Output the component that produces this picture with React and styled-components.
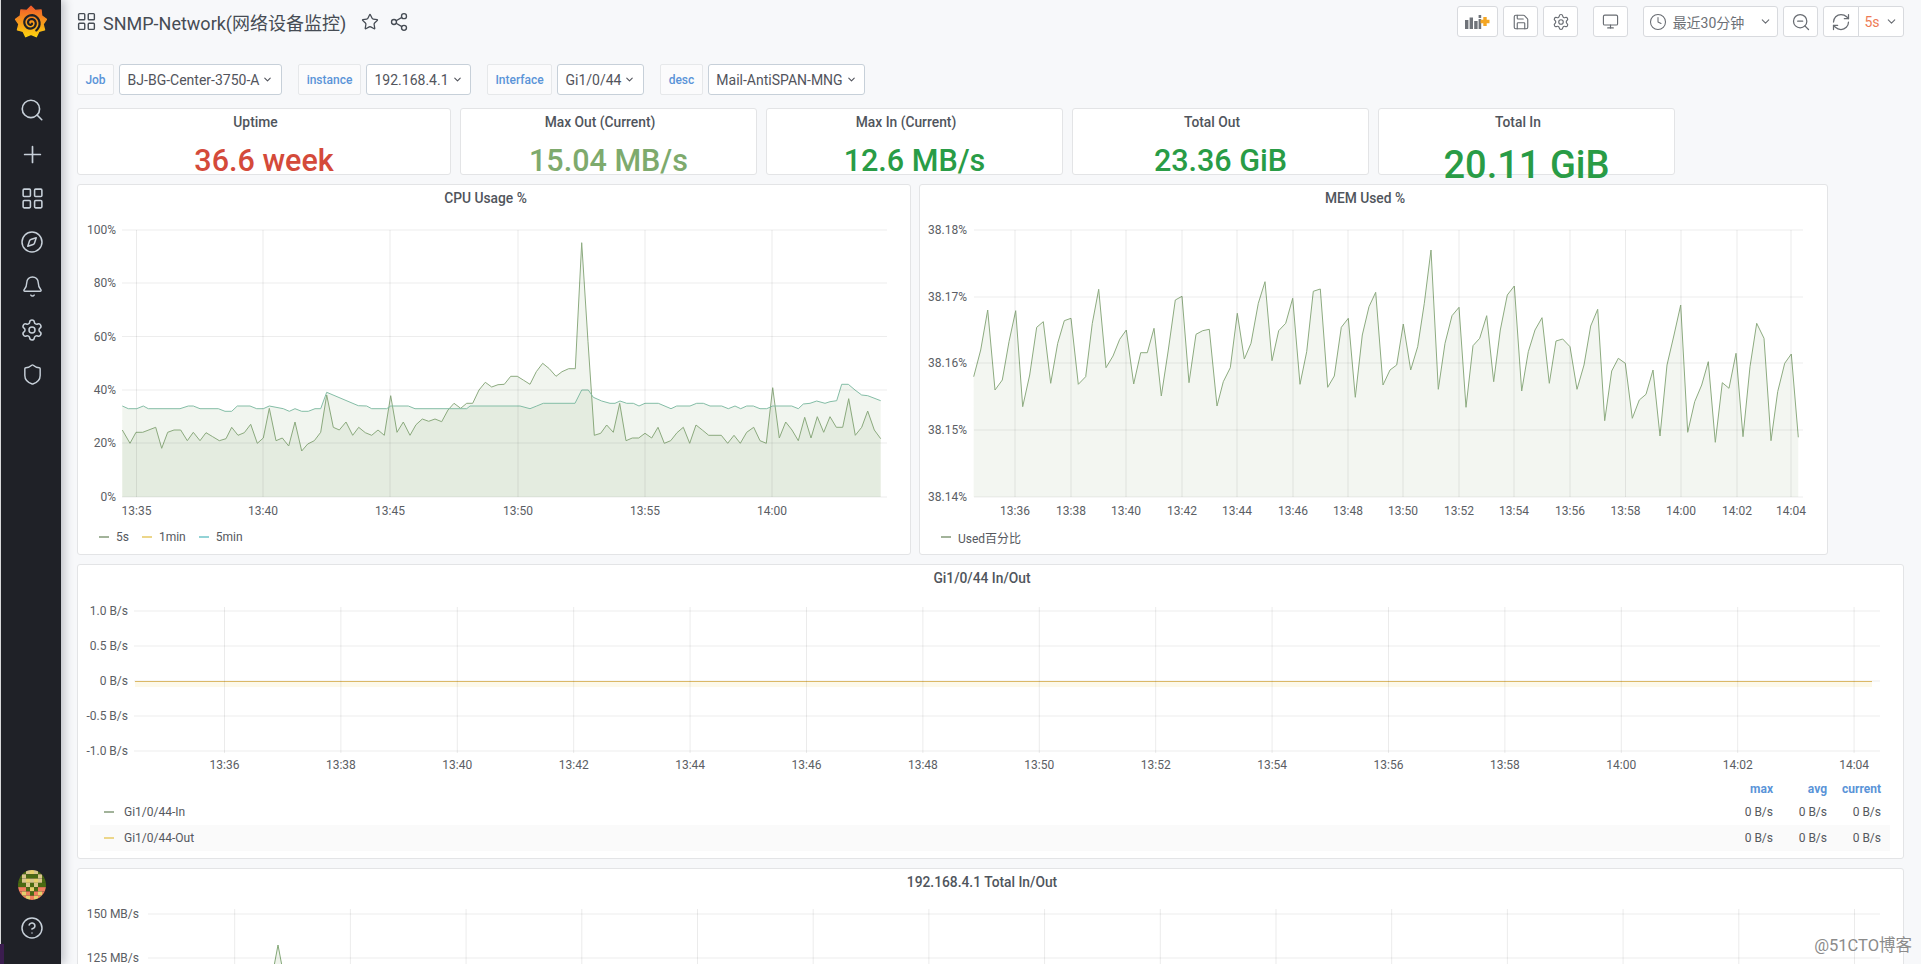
import React from 'react';
import styled, { createGlobalStyle } from 'styled-components';
import {
  Search, Plus, LayoutGrid, Compass, Bell, Settings, Shield, CircleHelp,
  Star, Share2, Save, Monitor, Clock, ZoomOut, RefreshCw, ChevronDown,
} from 'lucide-react';

const FONT = 'Roboto, "Noto Sans CJK SC", "Liberation Sans", sans-serif';

const GlobalStyle = createGlobalStyle`
  html, body { margin: 0; padding: 0; height: 100%; overflow: hidden; background: #f7f8fa; }
  body { font-family: ${FONT}; color: #464c54; }
  * { box-sizing: border-box; }
`;

/* ---------- chart data (page coordinates) ---------- */
const conv = (x0, y0, list, sx = 3) => list.map(([x, y]) => [x0 + x / sx, y0 + y / 3]);

const cpu5s = [
  ...conv(0, 200, [[367,690],[390,730],[408,697],[428,697],[467,682],[485,745],[503,697],[522,690],[542,690],[562,722],[580,697],[600,722],[618,698],[638,710],[658,722],[678,716],[695,682],[714,706],[733,698],[752,673],[772,730],[790,714],[808,625],[828,722],[847,714],[866,738],[885,666],[905,753],[923,732],[943,722],[962,697],[980,585],[1000,682],[1018,690],[1038,666],[1058,706],[1076,682],[1096,698],[1115,706],[1134,690],[1153,706],[1172,587],[1191,697],[1210,666],[1230,706],[1248,674],[1267,657],[1286,664],[1305,657],[1325,665],[1344,630],[1362,610],[1382,625],[1400,610]]),
  ...conv(470, 200, [[8,610],[27,570],[46,547],[65,561],[84,554],[103,553],[122,529],[142,529],[161,541],[180,553],[199,515],[218,490],[238,506],[258,529],[276,515],[296,506],[316,506],[335,128],[354,425],[373,706],[392,700],[410,675],[430,697],[449,610],[468,722],[487,714],[506,714],[525,700],[545,714],[564,682],[583,730],[602,722],[621,698],[640,682],[659,730],[678,675],[697,690],[716,706],[735,706],[754,706],[773,730],[792,706],[811,730],[830,697],[851,682],[870,722],[889,730],[908,563],[928,714],[947,666],[966,690],[985,722],[1004,652],[1023,714],[1042,650],[1061,697],[1080,650],[1099,682],[1118,682],[1136,596],[1156,706],[1175,682],[1193,633],[1213,690],[1232,716]]),
];

const cpu5m = [
  ...conv(0, 200, [[367,618],[385,626],[410,626],[430,618],[445,626],[540,626],[565,618],[580,618],[600,626],[655,626],[675,634],[695,634],[712,618],[750,618],[770,626],[790,626],[808,618],[850,626],[868,634],[885,626],[905,634],[925,634],[945,626],[962,626],[980,577],[1075,617],[1100,618],[1115,626],[1160,626],[1172,618],[1225,618],[1245,626],[1400,626]]),
  ...conv(470, 200, [[0,618],[150,618],[180,626],[200,618],[220,610],[315,610],[335,570],[355,570],[370,592],[395,603],[420,610],[435,610],[450,603],[470,610],[490,610],[507,618],[525,610],[565,610],[603,626],[620,618],[660,618],[680,610],[700,610],[720,618],[755,618],[775,626],[795,618],[812,626],[830,618],[850,618],[870,626],[890,626],[908,618],[965,618],[985,626],[1000,612],[1020,610],[1040,603],[1065,610],[1080,605],[1100,602],[1115,553],[1135,553],[1155,570],[1175,585],[1193,587],[1232,602]]),
];

const mem = [
  ...conv(915, 200, [[176,530],[197,450],[218,330],[240,570],[262,540],[282,425],[302,332],[323,620],[344,525],[365,382],[385,365],[407,550],[428,430],[448,362],[468,355],[490,553],[512,530],[532,370],[551,268],[573,503],[594,468],[614,418],[634,390],[656,552],[677,458],[697,458],[717,385],[739,588],[760,450],[781,300],[801,289],[822,548],[843,403],[863,392],[883,388],[906,618],[925,545],[946,503],[967,340],[988,477],[1008,430],[1030,310],[1050,245],[1071,482],[1091,392],[1112,370],[1133,295],[1155,553],[1175,455],[1195,274],[1216,267],[1238,562],[1258,528],[1279,382],[1300,355],[1321,592]]),
  ...conv(1360, 200, [[7,405],[27,320],[47,277],[69,555],[90,510],[110,495],[130,372],[152,510],[173,440],[193,310],[213,150],[235,568],[255,430],[276,347],[297,322],[318,622],[339,437],[359,415],[380,347],[401,545],[421,390],[442,285],[463,258],[485,573],[505,455],[525,390],[546,353],[568,550],[588,423],[608,417],[630,440],[651,568],[672,495],[692,378],[713,328],[734,662],[755,513],[775,475],[796,490],[817,655],[838,600],[858,583],[879,510],[900,708],[921,495],[942,405],[962,315],[983,697],[1004,605],[1025,555],[1045,485],[1066,727],[1087,548],[1107,565],[1128,460],[1149,710],[1170,500],[1190,370],[1212,415],[1233,722],[1253,575],[1274,490],[1294,462],[1315,712]]),
];

const line = (pts) => pts.map(([x, y], i) => `${i ? 'L' : 'M'}${x.toFixed(1)} ${y.toFixed(1)}`).join(' ');
const area = (pts, base) => `${line(pts)} L${pts[pts.length - 1][0].toFixed(1)} ${base} L${pts[0][0].toFixed(1)} ${base} Z`;

const cpuV = [[136.5,'13:35'],[263,'13:40'],[390,'13:45'],[518,'13:50'],[645,'13:55'],[772,'14:00']];
const memTimes = ['13:36','13:38','13:40','13:42','13:44','13:46','13:48','13:50','13:52','13:54','13:56','13:58','14:00','14:02','14:04'];
const memX = [1015,1071,1126,1182,1237,1293,1348,1403,1459,1514,1570,1625.5,1681,1737,1791];
const ioV = memTimes.map((t, i) => [224.5 + i * 116.4, t]);
const totalX = Array.from({ length: 15 }, (_, i) => 234.7 + i * 115.7);

/* ---------- layout ---------- */
const Shell = styled.div`
  display: flex;
  position: relative;
  width: 100%;
  height: 100vh;
  overflow: hidden;
  font-family: ${FONT};
`;

const Sidebar = styled.nav`
  position: relative;
  z-index: 2;
  flex: 0 0 61px;
  display: flex;
  flex-direction: column;
  align-items: center;
  background: #1f2127;
  border-left: 1px solid #d8d9da;
  box-shadow: 3px 0 9px rgba(40, 44, 60, 0.28);
  padding: 5px 0 15px;
  color: #c7d0d9;
`;

const NavList = styled.div`
  margin-top: 49px;
  display: flex;
  flex-direction: column;
`;

const NavBottom = styled.div`
  margin-top: auto;
  display: flex;
  flex-direction: column;
`;

const NavItem = styled.div`
  width: 60px;
  height: ${(p) => p.$h || 44}px;
  display: flex;
  align-items: center;
  justify-content: center;
  padding-left: 2px;
`;

const CornerMark = styled.div`
  position: absolute;
  left: -1px;
  bottom: 0;
  width: 4px;
  height: 20px;
  background: #3b1d4f;
`;

const Main = styled.main`
  flex: 1;
  min-width: 0;
  padding: 6px 17px 0 16px;
  display: flex;
  flex-direction: column;
  overflow: hidden;
`;

const TopBar = styled.header`
  flex: none;
  display: flex;
  align-items: center;
  height: 31px;
  color: #464c54;
`;

const TitleIcon = styled.span`
  display: flex;
  margin: 0 6px 0 -1px;
  color: #464c54;
`;

const DashTitle = styled.h1`
  margin: 0;
  font-size: 18px;
  font-weight: 400;
  color: #464c54;
  white-space: nowrap;
`;

const TitleAction = styled.span`
  display: flex;
  margin-left: ${(p) => p.$ml}px;
  color: #464c54;
`;

const TopActions = styled.div`
  margin-left: auto;
  display: flex;
  align-items: center;
`;

const ToolButton = styled.div`
  display: flex;
  align-items: center;
  justify-content: center;
  gap: ${(p) => p.$gap || 0}px;
  width: ${(p) => p.$w}px;
  height: 31px;
  margin-left: ${(p) => p.$ml || 0}px;
  background: #fff;
  border: 1px solid #d8dade;
  border-radius: ${(p) => p.$radius || '3px'};
  color: #686c72;
  font-size: 14px;
  white-space: nowrap;
`;

const OrangeText = styled.span`
  color: #ee7b55;
`;

const TimeText = styled.span`
  color: #6c7076;
  margin-right: 9px;
`;

const VarBar = styled.div`
  flex: none;
  display: flex;
  align-items: center;
  height: 31px;
  margin-top: 27px;
`;

const VarLabel = styled.div`
  display: flex;
  align-items: center;
  justify-content: center;
  width: ${(p) => p.$w}px;
  height: 31px;
  margin-left: ${(p) => p.$ml || 0}px;
  background: #fbfbfc;
  border: 1px solid #e6e8ea;
  border-radius: 2px;
  color: #5a94d8;
  font-size: 12px;
  font-weight: 500;
`;

const VarValue = styled.div`
  display: flex;
  align-items: center;
  justify-content: center;
  gap: 3px;
  width: ${(p) => p.$w}px;
  height: 31px;
  margin-left: 5px;
  background: #fff;
  border: 1px solid #c7d0d9;
  border-radius: 3px;
  color: #52545c;
  font-size: 14px;
  white-space: nowrap;
`;

const StatRow = styled.div`
  flex: none;
  display: grid;
  grid-template-columns: 374px 297px 297px 297px 297px;
  column-gap: 9px;
  margin-top: 13px;
`;

const Panel = styled.section`
  background: #fff;
  border: 1px solid #e3e4e6;
  border-radius: 3px;
`;

const StatPanel = styled(Panel)`
  height: 67px;
  display: flex;
  flex-direction: column;
  align-items: center;
`;

const PanelTitle = styled.div`
  height: 27px;
  line-height: 26px;
  padding-right: 17px;
  font-size: 13.8px;
  font-weight: 500;
  color: #50555c;
  text-align: center;
  white-space: nowrap;
`;

const StatValue = styled.div`
  font-size: ${(p) => p.$size}px;
  line-height: 36px;
  margin-top: ${(p) => p.$mt || 0}px;
  font-weight: 500;
  color: ${(p) => p.$color};
  white-space: nowrap;
`;

const ChartRow = styled.div`
  flex: none;
  display: grid;
  grid-template-columns: 834px 909px;
  column-gap: 8px;
  margin-top: 9px;
`;

const GraphPanel = styled(Panel)`
  flex: none;
  height: ${(p) => p.$h}px;
  margin-top: ${(p) => p.$mt || 0}px;
  overflow: hidden;
`;

const Plot = styled.svg`
  display: block;
  font-family: ${FONT};
`;

const AxisText = styled.text`
  font-size: 12px;
  fill: #5b5e64;
`;

const Legend = styled.div`
  display: flex;
  align-items: center;
  height: 24px;
  padding-left: 21px;
  font-size: 12px;
  color: #55585e;
`;

const LegendEntry = styled.div`
  display: flex;
  align-items: center;
  margin-right: 13px;
`;

const Dash = styled.i`
  display: block;
  flex: none;
  width: 10px;
  height: 2px;
  margin-right: ${(p) => p.$mr || 7}px;
  background: ${(p) => p.$color};
`;

const LegendTable = styled.div`
  margin-left: 12px;
  width: 1800px;
  font-size: 12px;
  color: #55585e;
`;

const LegendRow = styled.div`
  display: flex;
  align-items: center;
  height: ${(p) => p.$h || 26}px;
  padding: 0 9px 0 14px;
  background: ${(p) => (p.$alt ? '#fafafa' : 'transparent')};
`;

const LegendName = styled.div`
  flex: 1;
  display: flex;
  align-items: center;
`;

const LegendCell = styled.div`
  width: 54px;
  text-align: right;
  color: ${(p) => (p.$head ? '#5a94d8' : 'inherit')};
  font-weight: ${(p) => (p.$head ? 700 : 400)};
`;

const Watermark = styled.div`
  position: absolute;
  right: 9px;
  bottom: 8px;
  z-index: 3;
  font-size: 16.5px;
  color: #8b8b8b;
  text-shadow: 0 0 2px #fff;
`;

/* ---------- drawings ---------- */
const Logo = () => {
  const cx = 20, cy = 20;
  const teeth = 9;
  let d = '';
  for (let i = 0; i < teeth * 2; i++) {
    const a = (i / (teeth * 2)) * Math.PI * 2 - Math.PI / 2;
    const r = i % 2 === 0 ? 18.5 : 14.5;
    d += `${i ? 'L' : 'M'}${(cx + r * Math.cos(a)).toFixed(1)} ${(cy + r * Math.sin(a)).toFixed(1)} `;
  }
  let s = '';
  for (let t = 0; t <= 1; t += 0.02) {
    const a = t * Math.PI * 4.2 + 0.6;
    const r = 1.5 + t * 9.5;
    s += `${t ? 'L' : 'M'}${(cx + r * Math.cos(a)).toFixed(1)} ${(cy + 1 + r * Math.sin(a)).toFixed(1)} `;
  }
  return (
    <svg width="34" height="34" viewBox="0 0 40 40" aria-label="Grafana">
      <defs>
        <linearGradient id="gf" x1="0" y1="1" x2="0" y2="0">
          <stop offset="0" stopColor="#fcd20e" />
          <stop offset="1" stopColor="#f15a2b" />
        </linearGradient>
      </defs>
      <path d={d + 'Z'} fill="url(#gf)" stroke="url(#gf)" strokeWidth="1.5" strokeLinejoin="round" />
      <path d={s} fill="none" stroke="#1f2127" strokeWidth="2.6" strokeLinecap="round" />
    </svg>
  );
};

const AVATAR = [
  'GGPYPGG',
  'GPGGGPG',
  'GPYPYPG',
  'GGPGPGG',
  'SSGYGSS',
  'SYSGSYS',
  'GSYSYSG',
];
const AVATAR_COLORS = { G: '#4a6a12', P: '#d8c58a', Y: '#e6cf6c', S: '#f0805e' };

const Avatar = () => (
  <svg width="28" height="30" viewBox="0 0 28 28" preserveAspectRatio="none" aria-label="avatar">
    <defs>
      <clipPath id="av"><circle cx="14" cy="14" r="14" /></clipPath>
    </defs>
    <g clipPath="url(#av)">
      {AVATAR.map((row, y) =>
        row.split('').map((c, x) => (
          <rect key={`${x}-${y}`} x={x * 4} y={y * 4} width="4" height="4" fill={AVATAR_COLORS[c]} />
        ))
      )}
    </g>
  </svg>
);

const AddPanelIcon = () => (
  <svg width="25" height="16" viewBox="0 0 25 16" aria-label="add panel">
    <g fill="#6f7379">
      <rect x="0" y="6" width="3.4" height="9" />
      <rect x="4.6" y="3.5" width="3.4" height="11.5" />
      <rect x="9.2" y="7" width="3.4" height="8" />
      <rect x="13.6" y="1" width="2.6" height="3" />
      <rect x="13.6" y="5" width="2.6" height="10" />
    </g>
    <path d="M20 3v9M15.5 7.5h9" stroke="#f4a623" strokeWidth="3.4" />
  </svg>
);

const Chart = ({ box, h, gridL, gridR, labelR, vs, vTop, vBottom, labelY, children }) => (
  <Plot width={box.w} height={box.h} viewBox={`${box.x} ${box.y} ${box.w} ${box.h}`}>
    {children}
    {h.map(([y]) => (
      <line key={y} x1={gridL} x2={gridR} y1={y} y2={y} stroke="#000" strokeOpacity="0.07" />
    ))}
    {vs.map(([x]) => (
      <line key={x} x1={x} x2={x} y1={vTop} y2={vBottom} stroke="#000" strokeOpacity="0.08" />
    ))}
    {h.map(([y, t]) => (
      <AxisText key={t} x={labelR} y={y + 4} textAnchor="end">{t}</AxisText>
    ))}
    {labelY && vs.map(([x, t]) => (
      <AxisText key={t} x={x} y={labelY} textAnchor="middle">{t}</AxisText>
    ))}
  </Plot>
);

const Series = ({ pts, base, stroke, fill }) => (
  <>
    <path d={area(pts, base)} fill={fill} />
    <path d={line(pts)} fill="none" stroke={stroke} strokeWidth="1" strokeLinejoin="round" />
  </>
);

const navIcons = [
  [Search, 26], [Plus, 27], [LayoutGrid, 25], [Compass, 24], [Bell, 23], [Settings, 24], [Shield, 23],
];

export default function App() {
  return (
    <Shell>
      <GlobalStyle />
      <Sidebar>
        <Logo />
        <NavList>
          {navIcons.map(([Icon, size], i) => (
            <NavItem key={i}><Icon size={size} strokeWidth={1.5} /></NavItem>
          ))}
        </NavList>
        <NavBottom>
          <NavItem $h={43}><Avatar /></NavItem>
          <NavItem $h={43}><CircleHelp size={24} strokeWidth={1.5} /></NavItem>
        </NavBottom>
        <CornerMark />
      </Sidebar>

      <Main>
        <TopBar>
          <TitleIcon><LayoutGrid size={21} strokeWidth={1.6} /></TitleIcon>
          <DashTitle>SNMP-Network(网络设备监控)</DashTitle>
          <TitleAction $ml={15}><Star size={18} strokeWidth={1.7} /></TitleAction>
          <TitleAction $ml={10}><Share2 size={20} strokeWidth={1.6} /></TitleAction>
          <TopActions>
            <ToolButton $w={41}><AddPanelIcon /></ToolButton>
            <ToolButton $w={35} $ml={5}><Save size={18} strokeWidth={1.5} /></ToolButton>
            <ToolButton $w={35} $ml={5}><Settings size={18} strokeWidth={1.5} /></ToolButton>
            <ToolButton $w={35} $ml={15}><Monitor size={17} strokeWidth={1.6} /></ToolButton>
            <ToolButton $w={135} $ml={15} $gap={6}>
              <Clock size={18} strokeWidth={1.4} />
              <TimeText>最近30分钟</TimeText>
              <ChevronDown size={13} strokeWidth={2} />
            </ToolButton>
            <ToolButton $w={35} $ml={5}><ZoomOut size={20} strokeWidth={1.5} /></ToolButton>
            <ToolButton $w={36} $ml={5} $radius="3px 0 0 3px"><RefreshCw size={20} strokeWidth={1.5} /></ToolButton>
            <ToolButton $w={46} $ml={-1} $gap={5} $radius="0 3px 3px 0">
              <OrangeText>5s</OrangeText>
              <ChevronDown size={13} strokeWidth={2} />
            </ToolButton>
          </TopActions>
        </TopBar>

        <VarBar>
          <VarLabel $w={37}>Job</VarLabel>
          <VarValue $w={163}>BJ-BG-Center-3750-A <ChevronDown size={11} strokeWidth={2.4} /></VarValue>
          <VarLabel $w={63} $ml={16}>instance</VarLabel>
          <VarValue $w={105}>192.168.4.1 <ChevronDown size={11} strokeWidth={2.4} /></VarValue>
          <VarLabel $w={65} $ml={16}>Interface</VarLabel>
          <VarValue $w={87}>Gi1/0/44 <ChevronDown size={11} strokeWidth={2.4} /></VarValue>
          <VarLabel $w={43} $ml={16}>desc</VarLabel>
          <VarValue $w={157}>Mail-AntiSPAN-MNG <ChevronDown size={11} strokeWidth={2.4} /></VarValue>
        </VarBar>

        <StatRow>
          <StatPanel><PanelTitle>Uptime</PanelTitle><StatValue $size={30.5} $mt={8} $color="#d44a3a">36.6 week</StatValue></StatPanel>
          <StatPanel><PanelTitle>Max Out (Current)</PanelTitle><StatValue $size={30.5} $mt={8} $color="#7eaa6d">15.04 MB/s</StatValue></StatPanel>
          <StatPanel><PanelTitle>Max In (Current)</PanelTitle><StatValue $size={30.5} $mt={8} $color="#299c46">12.6 MB/s</StatValue></StatPanel>
          <StatPanel><PanelTitle>Total Out</PanelTitle><StatValue $size={30.5} $mt={8} $color="#299c46">23.36 GiB</StatValue></StatPanel>
          <StatPanel><PanelTitle>Total In</PanelTitle><StatValue $size={38} $mt={12} $color="#299c46">20.11 GiB</StatValue></StatPanel>
        </StatRow>

        <ChartRow>
          <GraphPanel $h={371}>
            <PanelTitle>CPU Usage %</PanelTitle>
            <Chart
              box={{ x: 78, y: 212, w: 832, h: 313 }}
              h={[[230,'100%'],[283,'80%'],[336.5,'60%'],[390,'40%'],[443,'20%'],[497,'0%']]}
              gridL={122} gridR={887} labelR={116}
              vs={cpuV} vTop={230} vBottom={497} labelY={515}
            >
              <Series pts={cpu5s} base={497} stroke="#8dab80" fill="rgba(120,160,100,0.105)" />
              <Series pts={cpu5m} base={497} stroke="#84bda6" fill="rgba(120,160,100,0.105)" />
            </Chart>
            <Legend>
              <LegendEntry><Dash $color="#a2b39a" />5s</LegendEntry>
              <LegendEntry><Dash $color="#ecd68a" />1min</LegendEntry>
              <LegendEntry><Dash $color="#93d3d6" />5min</LegendEntry>
            </Legend>
          </GraphPanel>

          <GraphPanel $h={371}>
            <PanelTitle>MEM Used %</PanelTitle>
            <Chart
              box={{ x: 920, y: 212, w: 907, h: 313 }}
              h={[[230,'38.18%'],[297,'38.17%'],[363,'38.16%'],[430,'38.15%'],[497,'38.14%']]}
              gridL={974} gridR={1803} labelR={967}
              vs={memTimes.map((t, i) => [memX[i], t])} vTop={230} vBottom={497} labelY={515}
            >
              <Series pts={mem} base={497} stroke="#8dab80" fill="rgba(120,160,100,0.09)" />
            </Chart>
            <Legend>
              <LegendEntry><Dash $color="#a2b39a" />Used百分比</LegendEntry>
            </Legend>
          </GraphPanel>
        </ChartRow>

        <GraphPanel $h={295} $mt={9}>
          <PanelTitle>Gi1/0/44 In/Out</PanelTitle>
          <Chart
            box={{ x: 78, y: 591, w: 1825, h: 187 }}
            h={[[610,'1.0 B/s'],[645,'0.5 B/s'],[680,'0 B/s'],[715,'-0.5 B/s'],[750,'-1.0 B/s']]}
            gridL={134} gridR={1880} labelR={128}
            vs={ioV} vTop={606} vBottom={752} labelY={768}
          >
            <rect x="135" y="680" width="1737" height="6" fill="#fdf9ea" />
            <line x1="135" x2="1872" y1="680.5" y2="680.5" stroke="#e3bf6a" />
          </Chart>
          <LegendTable>
            <LegendRow $h={20}>
              <LegendName />
              <LegendCell $head>max</LegendCell>
              <LegendCell $head>avg</LegendCell>
              <LegendCell $head>current</LegendCell>
            </LegendRow>
            <LegendRow>
              <LegendName><Dash $color="#a2b39a" $mr={10} />Gi1/0/44-In</LegendName>
              <LegendCell>0 B/s</LegendCell><LegendCell>0 B/s</LegendCell><LegendCell>0 B/s</LegendCell>
            </LegendRow>
            <LegendRow $alt>
              <LegendName><Dash $color="#ecd68a" $mr={10} />Gi1/0/44-Out</LegendName>
              <LegendCell>0 B/s</LegendCell><LegendCell>0 B/s</LegendCell><LegendCell>0 B/s</LegendCell>
            </LegendRow>
          </LegendTable>
        </GraphPanel>

        <GraphPanel $h={300} $mt={9}>
          <PanelTitle>192.168.4.1 Total In/Out</PanelTitle>
          <Chart
            box={{ x: 78, y: 895, w: 1825, h: 90 }}
            h={[[913,'150 MB/s'],[957,'125 MB/s']]}
            gridL={148} gridR={1880} labelR={139}
            vs={totalX.map((x) => [x, ''])} vTop={908} vBottom={985}
          >
            <path d="M272 976 L278 944 L284 976" fill="rgba(120,160,100,0.12)" stroke="#84a878" />
          </Chart>
        </GraphPanel>
      </Main>
      <Watermark>@51CTO博客</Watermark>
    </Shell>
  );
}
